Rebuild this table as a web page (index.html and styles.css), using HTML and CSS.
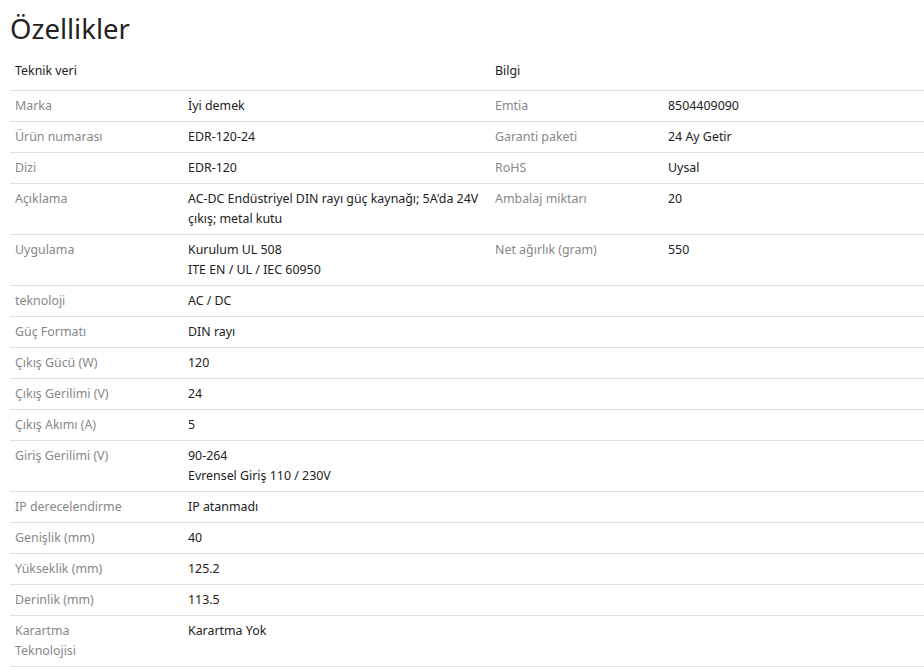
FILE: index.html
```html
<!DOCTYPE html>
<html lang="tr">
<head>
<meta charset="utf-8">
<title>Özellikler</title>
<link rel="stylesheet" href="styles.css">
</head>
<body>
<div class="page">
  <h2 class="title">Özellikler</h2>
  <table class="specs">
    <colgroup>
      <col class="c-label"><col class="c-value"><col class="c-label"><col class="c-value2">
    </colgroup>
    <thead>
      <tr><th colspan="2">Teknik veri</th><th colspan="2">Bilgi</th></tr>
    </thead>
    <tbody>
      <tr><td class="lbl">Marka</td><td>İyi demek</td><td class="lbl">Emtia</td><td>8504409090</td></tr>
      <tr><td class="lbl">Ürün numarası</td><td>EDR-120-24</td><td class="lbl">Garanti paketi</td><td>24 Ay Getir</td></tr>
      <tr><td class="lbl">Dizi</td><td>EDR-120</td><td class="lbl">RoHS</td><td>Uysal</td></tr>
      <tr><td class="lbl">Açıklama</td><td>AC-DC Endüstriyel DIN rayı güç kaynağı; 5A'da 24V çıkış; metal kutu</td><td class="lbl">Ambalaj miktarı</td><td>20</td></tr>
      <tr><td class="lbl">Uygulama</td><td>Kurulum UL 508<br>ITE EN / UL / IEC 60950</td><td class="lbl">Net ağırlık (gram)</td><td>550</td></tr>
      <tr><td class="lbl">teknoloji</td><td>AC / DC</td><td></td><td></td></tr>
      <tr><td class="lbl">Güç Formatı</td><td>DIN rayı</td><td></td><td></td></tr>
      <tr><td class="lbl">Çıkış Gücü (W)</td><td>120</td><td></td><td></td></tr>
      <tr><td class="lbl">Çıkış Gerilimi (V)</td><td>24</td><td></td><td></td></tr>
      <tr><td class="lbl">Çıkış Akımı (A)</td><td>5</td><td></td><td></td></tr>
      <tr><td class="lbl">Giriş Gerilimi (V)</td><td>90-264<br>Evrensel Giriş 110 / 230V</td><td></td><td></td></tr>
      <tr><td class="lbl">IP derecelendirme</td><td>IP atanmadı</td><td></td><td></td></tr>
      <tr><td class="lbl">Genişlik (mm)</td><td>40</td><td></td><td></td></tr>
      <tr><td class="lbl">Yükseklik (mm)</td><td>125.2</td><td></td><td></td></tr>
      <tr><td class="lbl">Derinlik (mm)</td><td>113.5</td><td></td><td></td></tr>
      <tr><td class="lbl">Karartma Teknolojisi</td><td>Karartma Yok</td><td></td><td></td></tr>
    </tbody>
  </table>
</div>
</body>
</html>
```
FILE: styles.css
```css
html, body {
  margin: 0;
  padding: 0;
  background: #fff;
}
body {
  font-family: "Noto Sans", "Open Sans", sans-serif;
  color: #222;
  overflow: hidden;
}
.page {
  padding: 0 0 0 10px;
}
.title {
  margin: 0;
  padding: 10px 0 0 0;
  font-size: 27.5px;
  line-height: 38px;
  font-weight: 400;
  color: #222;
}
.specs {
  border-collapse: collapse;
  table-layout: fixed;
  width: 914px;
  font-size: 12.4px;
  line-height: 20px;
  margin-top: 12px;
}
.c-label { width: 173px; }
.c-value { width: 307px; }
.c-value2 { width: 261px; }
.specs th {
  text-align: left;
  font-weight: 400;
  color: #222;
  padding: 1px 5px 9px 5px;
  border-bottom: 1px solid #dedede;
}
.specs td {
  vertical-align: top;
  padding: 5px 5px 5px 5px;
  border-bottom: 1px solid #dedede;
  color: #222;
}
.specs td.lbl {
  color: #888;
  padding-right: 50px;
}
```
